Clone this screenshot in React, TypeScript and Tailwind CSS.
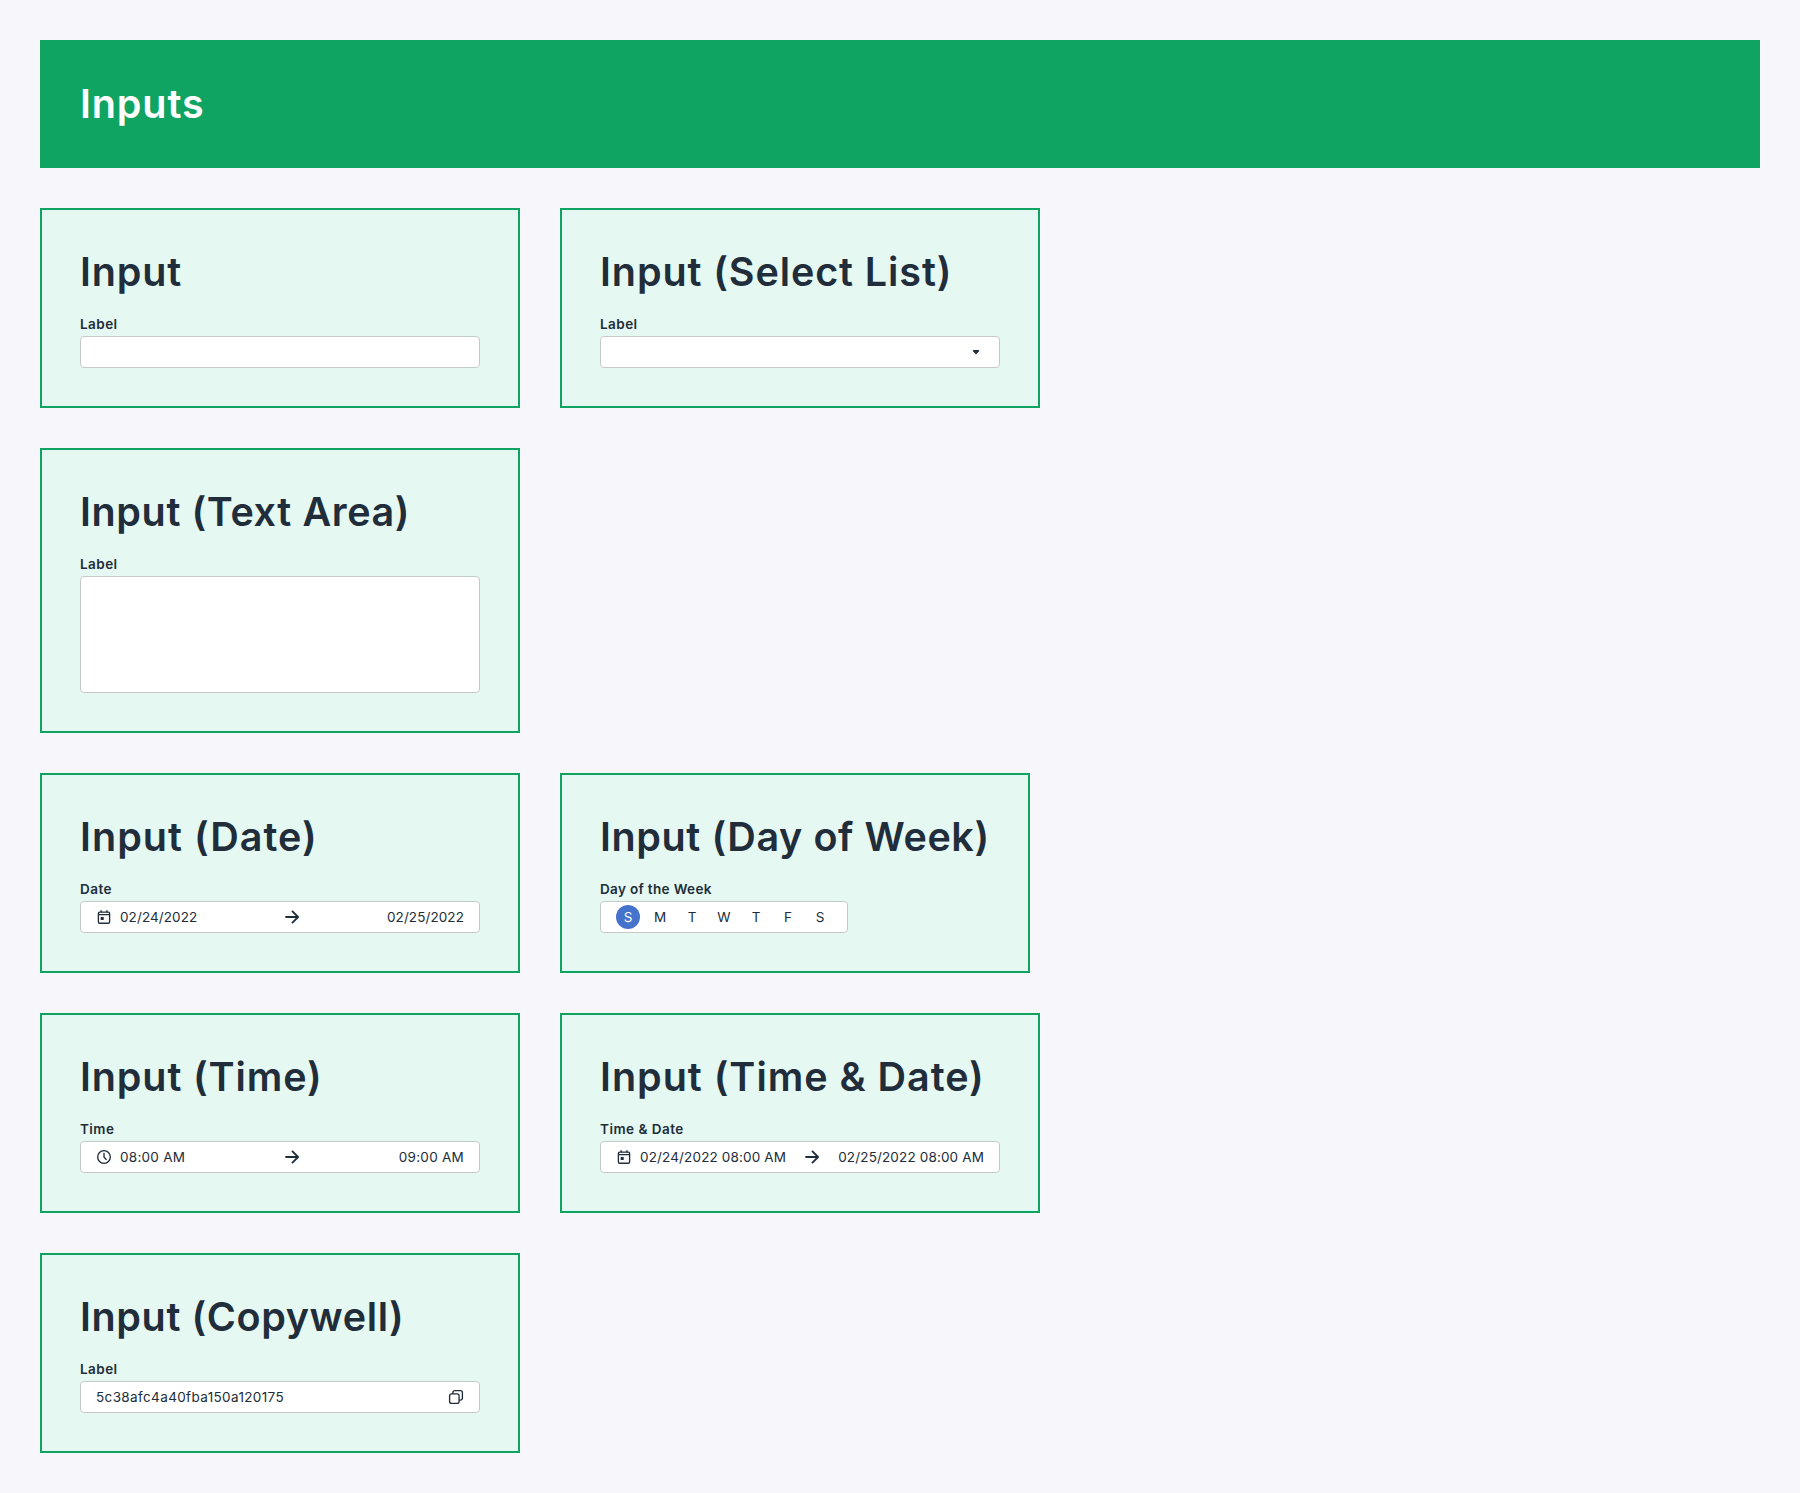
import type { ReactNode } from "react";

function Icon({ children, size = "size-4" }: { children: ReactNode; size?: string }) {
  return (
    <svg viewBox="0 0 24 24" fill="none" stroke="currentColor" strokeWidth={2} className={"shrink-0 " + size}>
      {children}
    </svg>
  );
}

const CalendarIcon = () => (
  <Icon>
    <rect x="3.6" y="4.8" width="16.8" height="16.6" rx="2" />
    <path d="M3.6 8.4h16.8M7.6 1.8v3M16.4 1.8v3" />
    <rect x="7" y="12" width="4.6" height="4.6" rx="0.8" fill="currentColor" stroke="none" />
  </Icon>
);

const ClockIcon = () => (
  <Icon>
    <circle cx="12" cy="12" r="9.5" />
    <path d="M12 5.6V12l3.8 4.4" strokeLinejoin="round" />
  </Icon>
);

const ArrowIcon = () => (
  <Icon size="size-5">
    <path d="M4 12h15.4M12 4.7l7.3 7.3-7.3 7.3" strokeWidth={2.2} strokeLinejoin="round" />
  </Icon>
);

const CopyIcon = () => (
  <Icon>
    <rect x="2.4" y="7.4" width="14.2" height="14.2" rx="3" />
    <path d="M7.4 7.4V5.4a3 3 0 0 1 3-3h8.2a3 3 0 0 1 3 3v8.2a3 3 0 0 1-3 3h-2" />
  </Icon>
);

const CaretIcon = () => (
  <Icon>
    <path d="M8.2 10.1h7.6l-3.8 4.1z" fill="currentColor" strokeLinejoin="round" />
  </Icon>
);

function Card({
  title,
  label,
  titleClass,
  labelClass = "tracking-[0.45px]",
  width = "w-[480px]",
  children,
}: {
  title: string;
  label: string;
  titleClass: string;
  labelClass?: string;
  width?: string;
  children: ReactNode;
}) {
  return (
    <section className={"flex flex-col items-start border-2 border-[#10a462] bg-[#e5f8f1] p-[38px] " + width}>
      <h2 className={"mb-4 whitespace-nowrap text-[39.5px] leading-[48px] font-semibold " + titleClass}>{title}</h2>
      <div className={"text-[13.5px] leading-6 font-semibold " + labelClass}>{label}</div>
      {children}
    </section>
  );
}

function Field({ className = "h-8 w-full", children }: { className?: string; children?: ReactNode }) {
  return (
    <div className={"flex items-center rounded border border-[#c6c9c9] bg-white px-[15px] text-[13.5px] " + className}>
      {children}
    </div>
  );
}

function Range({ icon, from, to, valueClass }: { icon: ReactNode; from: string; to: string; valueClass: string }) {
  return (
    <Field className="h-8 w-full gap-2">
      {icon}
      <div className="flex flex-1 items-center">
        <span className={"flex-1 whitespace-nowrap " + valueClass}>{from}</span>
        <ArrowIcon />
        <span className={"flex-1 text-right whitespace-nowrap " + valueClass}>{to}</span>
      </div>
    </Field>
  );
}

function Row({ children }: { children: ReactNode }) {
  return <div className="flex items-start gap-10">{children}</div>;
}

const days = ["S", "M", "T", "W", "T", "F", "S"];

export default function App() {
  return (
    <main className="flex min-h-[1493px] w-[1800px] flex-col gap-10 bg-[#f7f6fb] p-10 font-['Inter',sans-serif] text-[#212d3a]">
      <header className="bg-[#10a462] p-10">
        <h1 className="text-[39.5px] leading-[48px] font-semibold tracking-[0.87px] text-white">Inputs</h1>
      </header>

      <Row>
        <Card title="Input" titleClass="tracking-[0.84px]" label="Label">
          <Field />
        </Card>
        <Card title="Input (Select List)" titleClass="tracking-[0.9px]" label="Label">
          <Field className="h-8 w-full justify-end">
            <CaretIcon />
          </Field>
        </Card>
      </Row>

      <Row>
        <Card title="Input (Text Area)" titleClass="tracking-[0.61px]" label="Label">
          <Field className="h-[117px] w-full" />
        </Card>
      </Row>

      <Row>
        <Card title="Input (Date)" titleClass="tracking-[1.02px]" label="Date">
          <Range icon={<CalendarIcon />} from="02/24/2022" to="02/25/2022" valueClass="tracking-[0.09px]" />
        </Card>
        <Card
          title="Input (Day of Week)"
          titleClass="tracking-[0.6px]"
          label="Day of the Week"
          labelClass="tracking-[0.34px]"
          width="w-[470px]"
        >
          <Field className="h-8 w-[248px] gap-2">
            {days.map((day, i) => (
              <span
                key={i}
                className={
                  "flex size-6 items-center justify-center rounded-full " + (i === 0 ? "bg-[#4573cb] text-white" : "")
                }
              >
                {day}
              </span>
            ))}
          </Field>
        </Card>
      </Row>

      <Row>
        <Card title="Input (Time)" titleClass="tracking-[0.86px]" label="Time">
          <Range icon={<ClockIcon />} from="08:00 AM" to="09:00 AM" valueClass="tracking-[0.26px]" />
        </Card>
        <Card
          title="Input (Time & Date)"
          titleClass="tracking-[0.97px]"
          label="Time & Date"
          labelClass="tracking-[0.49px]"
        >
          <Range
            icon={<CalendarIcon />}
            from="02/24/2022 08:00 AM"
            to="02/25/2022 08:00 AM"
            valueClass="tracking-[0.145px]"
          />
        </Card>
      </Row>

      <Row>
        <Card title="Input (Copywell)" titleClass="tracking-[0.61px]" label="Label">
          <Field className="h-8 w-full justify-between">
            <span className="tracking-[0.37px]">5c38afc4a40fba150a120175</span>
            <CopyIcon />
          </Field>
        </Card>
      </Row>
    </main>
  );
}
